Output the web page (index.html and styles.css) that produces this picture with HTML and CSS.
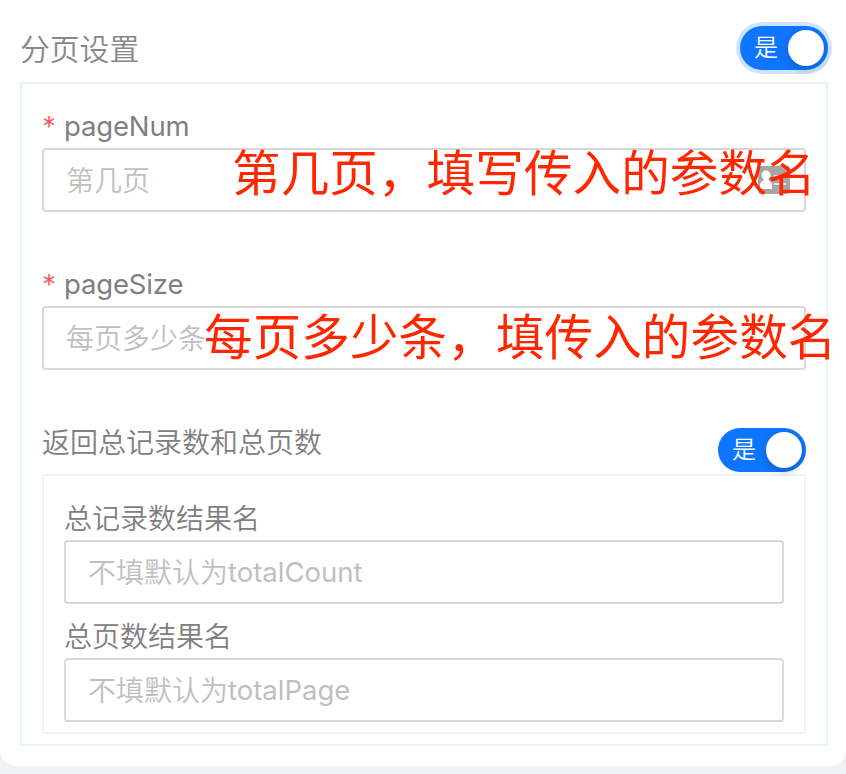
FILE: index.html
```html
<!DOCTYPE html>
<html lang="zh-CN">
<head>
<meta charset="utf-8">
<title>分页设置</title>
<link rel="stylesheet" href="styles.css">
</head>
<body>
<main class="card">
  <header class="row row-main">
    <h1 class="title">分页设置</h1>
    <button class="switch switch-focus" type="button"><span class="switch-text">是</span><span class="knob"></span></button>
  </header>
  <section class="panel">
    <div class="field">
      <div class="label"><span class="star">*</span><span class="latin">pageNum</span></div>
      <div class="input input-cool">
        <span class="hint">第几页</span>
        <svg class="contact" width="32" height="28" viewBox="0 0 32 28">
          <rect width="32" height="28" rx="3" fill="#a6a6a6"/>
          <circle cx="8" cy="9" r="4.500" fill="#fff"/>
          <path fill="#fff" d="M5.500 12h5v2.500q3.500 1 3.500 5v3.500h-12v-3.500q0-4 3.500-5z"/>
          <path stroke="#e4e4e4" stroke-width="2" d="M16 10H28M16 18H28"/>
        </svg>
        <span class="note note-num">第几页，填写传入的参数名</span>
      </div>
    </div>
    <div class="field">
      <div class="label"><span class="star">*</span><span class="latin">pageSize</span></div>
      <div class="input">
        <span class="hint">每页多少条</span>
        <span class="note note-size">每页多少条，填传入的参数名</span>
      </div>
    </div>
    <div class="row row-total">
      <div class="label">返回总记录数和总页数</div>
      <button class="switch" type="button"><span class="switch-text">是</span><span class="knob"></span></button>
    </div>
    <section class="subpanel">
      <div class="label">总记录数结果名</div>
      <div class="input"><span class="hint">不填默认为<span class="latin">totalCount</span></span></div>
      <div class="label label-next">总页数结果名</div>
      <div class="input"><span class="hint">不填默认为<span class="latin">totalPage</span></span></div>
    </section>
  </section>
</main>
</body>
</html>
```
FILE: styles.css
```css
* { box-sizing: border-box; }
body {
  margin: 0;
  height: 774px;
  overflow: hidden;
  background: #f0f1f6;
  font-family: Inter, "Noto Sans CJK SC", sans-serif;
  font-weight: 350;
  color: #808080;
}
.card {
  height: 766px;
  padding: 26px 18px 0 20px;
  background: #fff;
  border-radius: 0 0 16px 16px;
}
.row { display: flex; justify-content: space-between; }
.row-main { height: 56px; }
.title {
  margin: 1px 0 0;
  font-size: 29.8px;
  line-height: 44px;
  font-weight: 350;
  color: #888;
}
.switch {
  display: flex;
  align-items: center;
  justify-content: space-between;
  width: 88px;
  height: 44px;
  padding: 0 4px 0 14px;
  border: 0;
  border-radius: 22px;
  background: #0d75ff;
  color: #fff;
  font: 350 24px/44px Inter, "Noto Sans CJK SC", sans-serif;
}
.switch-focus { box-shadow: 0 0 0 4px #d0e2fd; }
.knob {
  width: 36px;
  height: 36px;
  border-radius: 50%;
  background: #fff;
  box-shadow: 0 4px 8px rgba(0, 35, 11, .2);
}
.panel {
  width: 808px;
  height: 664px;
  padding: 22px 20px;
  border: 2px solid #e6f3fe;
}
.field { height: 158px; }
.label {
  display: flex;
  height: 42px;
  font-size: 28px;
  line-height: 42px;
}
.star { width: 22px; color: #ff4d4f; }
.latin { font-size: 27.5px; font-weight: 370; }
.label .latin { line-height: 40px; letter-spacing: -.15px; }
.input {
  position: relative;
  display: flex;
  align-items: center;
  justify-content: space-between;
  height: 64px;
  padding: 0 14px 0 22px;
  border: 2px solid #d9d9d9;
  border-radius: 4px;
  color: #bfbfbf;
  font-size: 28px;
}
.hint { padding-bottom: 2px; }
.hint .latin { vertical-align: 1px; }
.input-cool { border-color: #d5d5da; }
.note {
  position: absolute;
  color: #ff2600;
  font-size: 48.5px;
  line-height: 68px;
  font-weight: 400;
  letter-spacing: .15px;
  white-space: nowrap;
}
.note-num { top: -10px; left: 188px; }
.note-size { top: -4px; left: 160px; }
.row-total { height: 52px; }
.row-total .switch { margin-top: 6px; }
.subpanel {
  height: 260px;
  padding: 22px 20px;
  border: 2px solid #edf4f9;
}
.label-next { margin-top: 12px; }
```
